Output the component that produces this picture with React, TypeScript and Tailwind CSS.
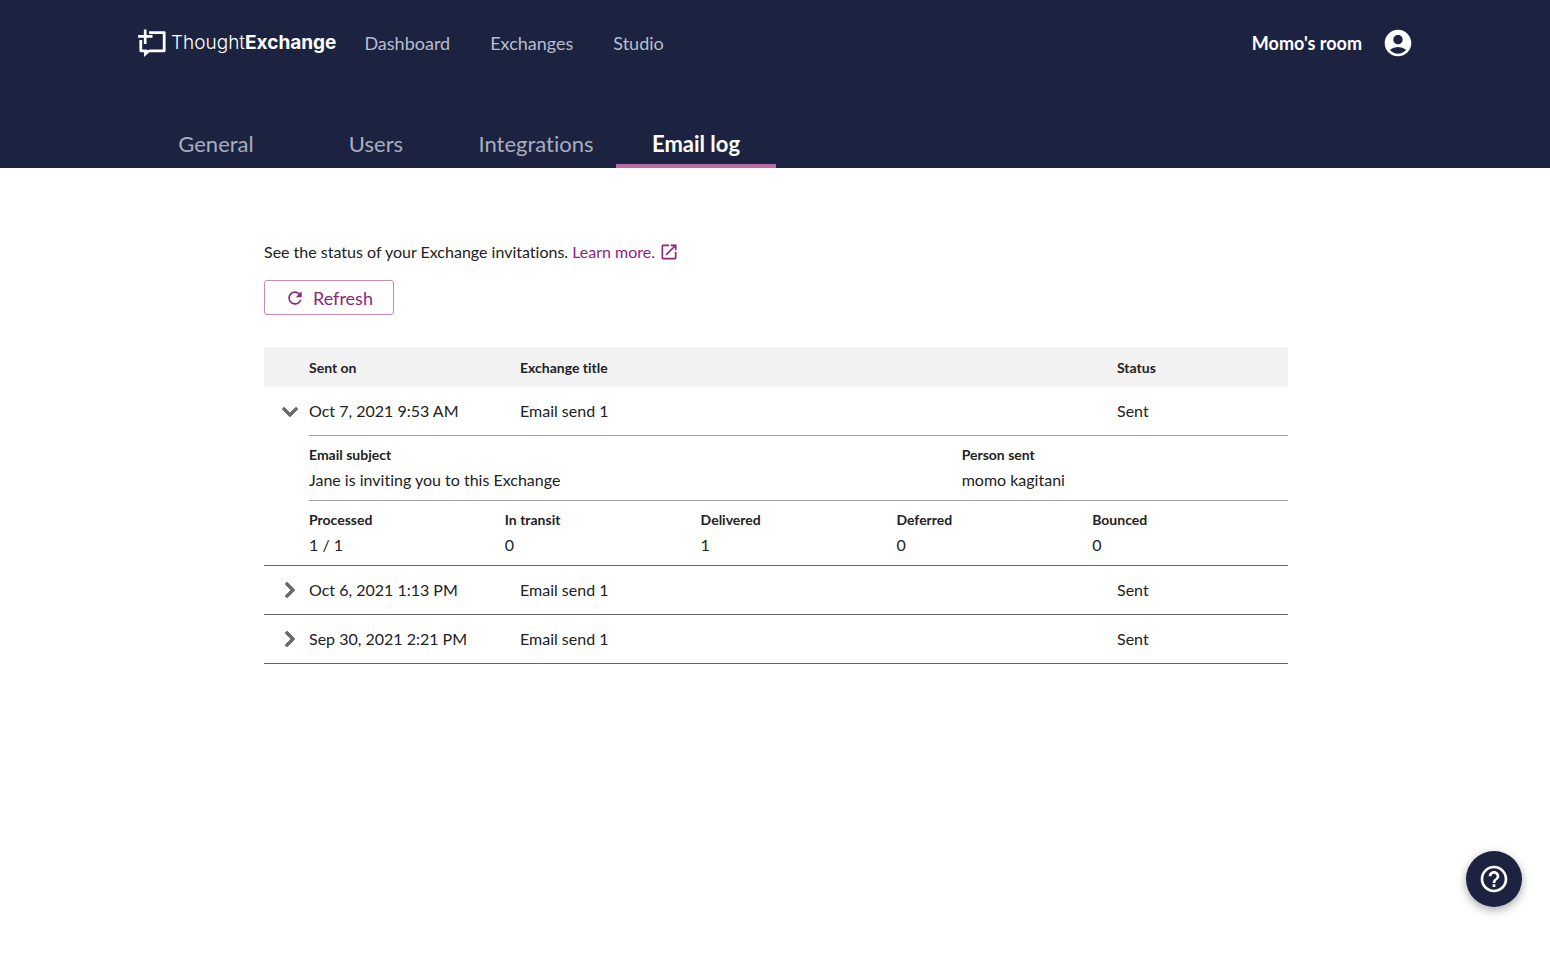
import { useState } from "react";
import { FaChevronDown, FaChevronRight } from "react-icons/fa";
import { MdAccountCircle, MdHelpOutline, MdOpenInNew, MdRefresh } from "react-icons/md";

type Detail = {
  subject: string;
  person: string;
  stats: { label: string; value: string }[];
};

type LogRow = {
  sentOn: string;
  title: string;
  status: string;
  detail?: Detail;
};

const NAV = ["Dashboard", "Exchanges", "Studio"];
const TABS = ["General", "Users", "Integrations", "Email log"];

const ROWS: LogRow[] = [
  {
    sentOn: "Oct 7, 2021 9:53 AM",
    title: "Email send 1",
    status: "Sent",
    detail: {
      subject: "Jane is inviting you to this Exchange",
      person: "momo kagitani",
      stats: [
        { label: "Processed", value: "1 / 1" },
        { label: "In transit", value: "0" },
        { label: "Delivered", value: "1" },
        { label: "Deferred", value: "0" },
        { label: "Bounced", value: "0" },
      ],
    },
  },
  { sentOn: "Oct 6, 2021 1:13 PM", title: "Email send 1", status: "Sent" },
  { sentOn: "Sep 30, 2021 2:21 PM", title: "Email send 1", status: "Sent" },
];

function Logo() {
  return (
    <a href="#" className="flex items-center gap-[3px] text-white">
      <svg viewBox="0 0 32 32" className="size-8" fill="none" stroke="currentColor" aria-hidden="true">
        <path d="M9.2 2.5v14.5M2 9.4h14.5" strokeWidth="2.7" />
        <path d="M13 5.6H28.2v18.2H13" strokeWidth="2.8" strokeLinejoin="round" />
        <path d="M4.8 13v10.8h6" strokeWidth="2.8" strokeLinejoin="round" />
        <path d="M8 23h8l-8 7z" fill="currentColor" stroke="none" />
      </svg>
      <span className="font-['Inter',sans-serif] text-[19px] leading-7 font-light">
        Thought<span className="font-bold">Exchange</span>
      </span>
    </a>
  );
}

function Header() {
  return (
    <header className="bg-[#1b2341] px-34">
      <div className="flex h-[86px] items-center">
        <Logo />
        <nav className="ml-7 flex gap-10 text-lg text-[#b9bdcb]">
          {NAV.map((item) => (
            <a key={item} href="#">
              {item}
            </a>
          ))}
        </nav>
        <div className="ml-auto flex items-center gap-5">
          <span className="text-lg font-bold text-white">Momo's room</span>
          <button type="button" aria-label="Account" className="text-white">
            <MdAccountCircle className="size-8" />
          </button>
        </div>
      </div>
      <nav className="flex pt-[34px]">
        {TABS.map((tab) => (
          <a
            key={tab}
            href="#"
            className={
              tab === "Email log"
                ? "flex h-12 w-40 items-center justify-center border-b-4 border-[#b869a6] pt-0.5 text-[22px] font-bold text-white"
                : "flex h-12 w-40 items-center justify-center border-b-4 border-transparent pt-0.5 text-[22px] text-[#a9adbd]"
            }
          >
            {tab}
          </a>
        ))}
      </nav>
    </header>
  );
}

function Field({ label, value }: { label: string; value: string }) {
  return (
    <div>
      <dt className="text-sm leading-5 font-bold">{label}</dt>
      <dd className="mt-[3px] leading-6">{value}</dd>
    </div>
  );
}

function DetailPanel({ detail }: { detail: Detail }) {
  return (
    <>
      <dl className="grid grid-cols-3 border-b border-[#a6a6a6] pt-[9px] pb-2">
        <div className="col-span-2">
          <Field label="Email subject" value={detail.subject} />
        </div>
        <Field label="Person sent" value={detail.person} />
      </dl>
      <dl className="grid grid-cols-5 pt-[9px] pb-2">
        {detail.stats.map((s) => (
          <Field key={s.label} label={s.label} value={s.value} />
        ))}
      </dl>
    </>
  );
}

function LogEntry({ row }: { row: LogRow }) {
  const [open, setOpen] = useState(Boolean(row.detail));
  const expanded = open && row.detail;
  const line = expanded ? "border-b border-[#a6a6a6]" : "border-b border-[#666]";
  const Chevron = expanded ? FaChevronDown : FaChevronRight;

  return (
    <>
      <tr className="h-[49px]">
        <td className={expanded ? "pl-4" : "border-b border-[#666] pl-4"}>
          <button
            type="button"
            aria-label="Toggle details"
            onClick={() => setOpen(!open)}
            className="flex w-5 justify-center text-[#6b6b6b]"
          >
            <Chevron className="size-[18px] stroke-current stroke-[24]" />
          </button>
        </td>
        <td className={line}>{row.sentOn}</td>
        <td className={line}>{row.title}</td>
        <td className={line}>{row.status}</td>
      </tr>
      {expanded && row.detail && (
        <tr>
          <td className="border-b border-[#666]" />
          <td colSpan={3} className="border-b border-[#666]">
            <DetailPanel detail={row.detail} />
          </td>
        </tr>
      )}
    </>
  );
}

export default function App() {
  return (
    <div className="min-h-screen bg-white font-['Lato',sans-serif] text-base text-[#222] [font-variant-ligatures:none]">
      <Header />
      <main className="pt-[72px] pr-6 pl-66">
        <p className="flex items-center leading-6">
          See the status of your Exchange invitations.
          <a href="#" className="ml-1 flex items-center gap-1 text-[#8a2580]">
            Learn more.
            <MdOpenInNew className="size-5" />
          </a>
        </p>
        <button
          type="button"
          className="mt-4 flex h-[35px] items-center gap-2 rounded-[3px] border border-[#c08bbb] px-5 text-lg text-[#8a2580]"
        >
          <MdRefresh className="size-5" />
          Refresh
        </button>
        <table className="mt-8 w-full max-w-5xl table-fixed border-separate border-spacing-0 text-left">
          <thead>
            <tr className="h-10 bg-[#f2f2f2] text-sm">
              <th className="w-[45px]" aria-label="Details" />
              <th className="w-[211px] pt-0.5">Sent on</th>
              <th className="pt-0.5">Exchange title</th>
              <th className="w-[171px] pt-0.5">Status</th>
            </tr>
          </thead>
          <tbody>
            {ROWS.map((row) => (
              <LogEntry key={row.sentOn} row={row} />
            ))}
          </tbody>
        </table>
      </main>
      <button
        type="button"
        aria-label="Help"
        className="fixed right-7 bottom-[61px] flex size-14 items-center justify-center rounded-full bg-[#1b2341] text-white shadow-[0_3px_10px_rgba(0,0,0,0.35)]"
      >
        <MdHelpOutline className="size-8" />
      </button>
    </div>
  );
}
